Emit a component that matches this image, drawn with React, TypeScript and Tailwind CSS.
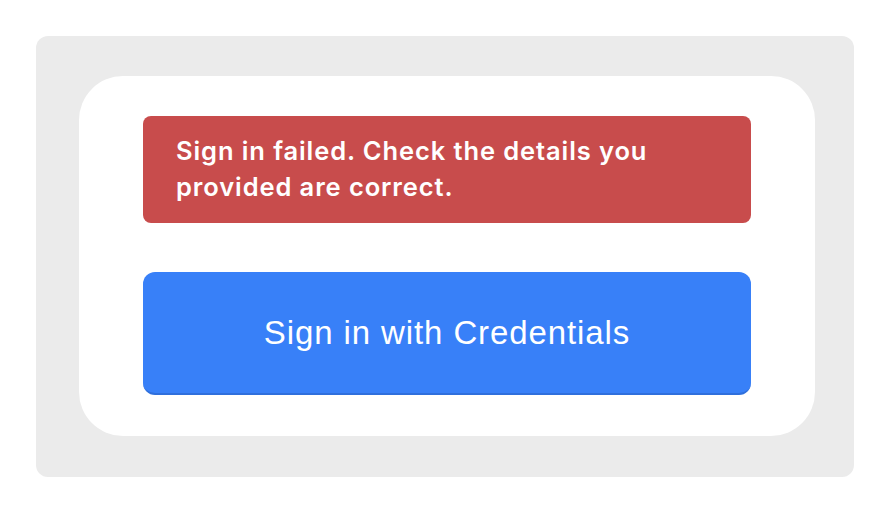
export default function App() {
  return (
    <div className="w-[890px] h-[514px] bg-white pt-[36px] pl-[36px]">
      <div className="w-[818px] h-[441px] bg-[#ebebeb] rounded-[12px] pt-[40px] pl-[43px]">
        <div className="w-[736px] h-[360px] bg-white rounded-[44px] pt-[40px] px-[64px] flex flex-col gap-[49px]">
          <div
            className="bg-[#c84c4c] rounded-[8px] pl-[33px] pr-[40px] pt-[17px] pb-[18px] text-white text-[25.5px] leading-[36px] font-semibold tracking-[0.9px]"
            style={{ fontFamily: 'Inter, "Noto Sans", sans-serif' }}
          >
            Sign in failed. Check the details you provided are correct.
          </div>
          <button
            className="w-full h-[123px] bg-[#3880f8] rounded-[12px] border-b-[2px] border-[#2f6fdc] text-white text-[33px] tracking-[0.9px] flex items-center justify-center"
            style={{ fontFamily: '"Liberation Sans", Arial, sans-serif' }}
          >
            Sign in with Credentials
          </button>
        </div>
      </div>
    </div>
  );
}
